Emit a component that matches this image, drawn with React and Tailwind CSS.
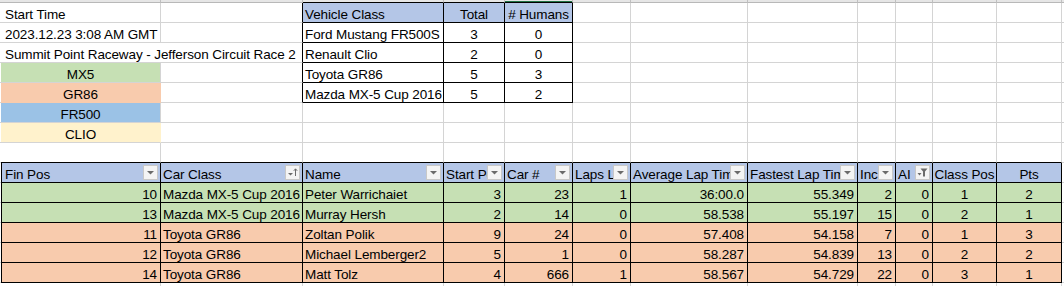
import React from 'react';
import clsx from 'clsx';

const W = [
  'w-[1px]',
  'w-[160px]',
  'w-[142px]',
  'w-[141px]',
  'w-[61px]',
  'w-[68px]',
  'w-[58px]',
  'w-[117px]',
  'w-[110px]',
  'w-[38px]',
  'w-[37px]',
  'w-[64px]',
  'w-[65px]',
  'flex-1',
];

const BG = {
  head: 'bg-[#b4c6e7]',
  green: 'bg-[#c6e0b4]',
  orange: 'bg-[#f8cbad]',
  blue: 'bg-[#9bc2e6]',
  cream: 'bg-[#fff2cc]',
};

function Cell({ w, b = 'g', r = 'g', l = false, bg = '', align = 'left', className = '', children }) {
  return (
    <div
      className={clsx(
        'shrink-0 h-full border-b border-r flex items-end overflow-hidden whitespace-nowrap leading-[15px]',
        w,
        b === 'k' ? 'border-b-black' : b === 'n' ? 'border-b-transparent' : 'border-b-[#d4d4d4]',
        r === 'k' ? 'border-r-black' : r === 'n' ? 'border-r-transparent' : 'border-r-[#d4d4d4]',
        l && 'border-l border-l-black',
        bg,
        align === 'right' && 'justify-end pr-[3px]',
        align === 'center' && 'justify-center',
        align === 'left' && (l ? 'pl-[3px]' : 'pl-[2px]'),
        className
      )}
    >
      {children}
    </div>
  );
}

function Spacer({ b = 'g' }) {
  return (
    <div
      className={clsx(
        'shrink-0 w-[1px] h-full border-b',
        b === 'k' ? 'border-b-black' : 'border-b-[#d4d4d4]'
      )}
    />
  );
}

function Row({ children, h = 'h-[20px]' }) {
  return <div className={clsx('flex w-full', h)}>{children}</div>;
}

function Tri() {
  return (
    <svg width="7" height="4" viewBox="0 0 7 4" className="block">
      <polygon points="0,0 7,0 3.5,3.5" fill="#6b6b6b" />
    </svg>
  );
}

function DropBtn({ kind = 'drop' }) {
  return (
    <div className="shrink-0 w-[15px] h-[15px] mr-[2px] mb-[2px] border border-[#c8c8c8] bg-[#f4f4f4] flex items-center justify-center">
      {kind === 'drop' && <Tri />}
      {kind === 'sort' && (
        <svg width="11" height="11" viewBox="0 0 11 11" className="block">
          <polygon points="1,6 6,6 3.5,8.5" fill="#6b6b6b" />
          <line x1="8.5" y1="2" x2="8.5" y2="9" stroke="#6b6b6b" strokeWidth="1" />
          <polyline points="6.8,3.8 8.5,1.8 10.2,3.8" fill="none" stroke="#6b6b6b" strokeWidth="1" />
        </svg>
      )}
      {kind === 'filter' && (
        <svg width="11" height="11" viewBox="0 0 11 11" className="block">
          <polygon points="0.5,6 4.5,6 2.5,8.5" fill="#6b6b6b" />
          <polygon points="3.5,1.5 10.5,1.5 8,4.5 8,9.5 6,9.5 6,4.5" fill="#6b6b6b" />
        </svg>
      )}
    </div>
  );
}

function HeadCell({ w, l = false, label, kind = 'drop', center = false }) {
  if (center) {
    return (
      <Cell w={w} b="k" r="k" bg={BG.head} align="center">
        {label}
      </Cell>
    );
  }
  return (
    <Cell w={w} b="k" r="k" l={l} bg={BG.head} align="none" className="justify-between">
      <span className={clsx('min-w-0 flex-1 overflow-hidden', l ? 'pl-[3px]' : 'pl-[2px]')}>{label}</span>
      <DropBtn kind={kind} />
    </Cell>
  );
}

const vehicles = [
  ['Ford Mustang FR500S', 3, 0],
  ['Renault Clio', 2, 0],
  ['Toyota GR86', 5, 3],
  ['Mazda MX-5 Cup 2016', 5, 2],
];

const legend = [
  ['MX5', BG.green, 'border-b-[#c6e0b4] border-r-[#c6e0b4]'],
  ['GR86', BG.orange, 'border-b-[#f8cbad] border-r-[#f8cbad]'],
  ['FR500', BG.blue, 'border-b-[#9bc2e6] border-r-[#9bc2e6]'],
  ['CLIO', BG.cream, 'border-b-[#d4d4d4] border-r-[#fff2cc]'],
];

const results = [
  [10, 'Mazda MX-5 Cup 2016', 'Peter Warrichaiet', 3, 23, 1, '36:00.0', '55.349', 2, 0, 1, 2, BG.green],
  [13, 'Mazda MX-5 Cup 2016', 'Murray Hersh', 2, 14, 0, '58.538', '55.197', 15, 0, 2, 1, BG.green],
  [11, 'Toyota GR86', 'Zoltan Polik', 9, 24, 0, '57.408', '54.158', 7, 0, 1, 3, BG.orange],
  [12, 'Toyota GR86', 'Michael Lemberger2', 5, 1, 0, '58.287', '54.839', 13, 0, 2, 2, BG.orange],
  [14, 'Toyota GR86', 'Matt Tolz', 4, 666, 1, '58.567', '54.729', 22, 0, 3, 1, BG.orange],
];

function EmptyCells({ from, to, b = 'g' }) {
  const out = [];
  for (let i = from; i <= to; i++) {
    out.push(<Cell key={i} w={W[i]} b={b} />);
  }
  return out;
}

export default function App() {
  return (
    <div className="w-[1064px] h-[286px] overflow-hidden bg-white text-black text-[13.5px] tracking-[-0.1px] font-['Liberation_Sans',Arial,sans-serif]">
      {/* top strip: bottom of column headers */}
      <div className="flex w-full h-[3px]">
        {W.map((w, i) => (
          <div
            key={i}
            className={clsx(
              'shrink-0 h-full border-b bg-[#e6e6e6]',
              w,
              i >= 3 && i <= 5 ? 'border-b-black' : 'border-b-[#b8b8b8]',
              i > 0 && i < 13 && 'border-r border-r-[#c0c0c0]'
            )}
          >
            {i === 5 && <div className="h-[1px] mt-[1px] bg-[#217346]" />}
          </div>
        ))}
      </div>

      {/* Row 1 */}
      <Row>
        <Spacer />
        <Cell w={W[1]} className="pl-[4px]">Start Time</Cell>
        <Cell w={W[2]} r="k" />
        <Cell w={W[3]} b="k" r="k" bg={BG.head}>Vehicle Class</Cell>
        <Cell w={W[4]} b="k" r="k" bg={BG.head} align="center">Total</Cell>
        <Cell w={W[5]} b="k" r="k" bg={BG.head} align="center"># Humans</Cell>
        <EmptyCells from={6} to={13} />
      </Row>

      {/* Rows 2-5 */}
      {vehicles.map((v, idx) => (
        <Row key={v[0]}>
          <Spacer />
          {idx === 0 && (
            <>
              <Cell w={W[1]} className="pl-[4px]">2023.12.23 3:08 AM GMT</Cell>
              <Cell w={W[2]} r="k" />
            </>
          )}
          {idx === 1 && (
            <Cell w="w-[302px]" r="k" className="pl-[4px]">
              Summit Point Raceway - Jefferson Circuit Race 2
            </Cell>
          )}
          {idx >= 2 && (
            <>
              <Cell w={W[1]} bg={legend[idx - 2][1]} align="center" className={legend[idx - 2][2]}>
                {legend[idx - 2][0]}
              </Cell>
              <Cell w={W[2]} r="k" />
            </>
          )}
          <Cell w={W[3]} b="k" r="k">{v[0]}</Cell>
          <Cell w={W[4]} b="k" r="k" align="center">{v[1]}</Cell>
          <Cell w={W[5]} b="k" r="k" align="center">{v[2]}</Cell>
          <EmptyCells from={6} to={13} />
        </Row>
      ))}

      {/* Rows 6-7 legend */}
      {[2, 3].map((k) => (
        <Row key={k}>
          <Spacer />
          <Cell w={W[1]} bg={legend[k][1]} align="center" className={legend[k][2]}>
            {legend[k][0]}
          </Cell>
          <EmptyCells from={2} to={13} />
        </Row>
      ))}

      {/* Row 8 empty, bottom black for table top */}
      <Row>
        <Spacer />
        <EmptyCells from={1} to={12} b="k" />
        <Cell w={W[13]} />
      </Row>

      {/* Row 9 header */}
      <Row>
        <Spacer />
        <HeadCell w={W[1]} l label="Fin Pos" />
        <HeadCell w={W[2]} label="Car Class" kind="sort" />
        <HeadCell w={W[3]} label="Name" />
        <HeadCell w={W[4]} label="Start Pos" />
        <HeadCell w={W[5]} label="Car #" />
        <HeadCell w={W[6]} label="Laps Led" />
        <HeadCell w={W[7]} label="Average Lap Time" />
        <HeadCell w={W[8]} label="Fastest Lap Time" />
        <HeadCell w={W[9]} label="Inc" />
        <HeadCell w={W[10]} label="AI" kind="filter" />
        <HeadCell w={W[11]} label="Class Pos" center />
        <HeadCell w={W[12]} label="Pts" center />
        <Cell w={W[13]} />
      </Row>

      {/* Data rows */}
      {results.map((r) => {
        const bg = r[12];
        return (
          <Row key={r[0]}>
            <Spacer />
            <Cell w={W[1]} l b="k" r="k" bg={bg} align="right">{r[0]}</Cell>
            <Cell w={W[2]} b="k" r="k" bg={bg}>{r[1]}</Cell>
            <Cell w={W[3]} b="k" r="k" bg={bg}>{r[2]}</Cell>
            <Cell w={W[4]} b="k" r="k" bg={bg} align="right">{r[3]}</Cell>
            <Cell w={W[5]} b="k" r="k" bg={bg} align="right">{r[4]}</Cell>
            <Cell w={W[6]} b="k" r="k" bg={bg} align="right">{r[5]}</Cell>
            <Cell w={W[7]} b="k" r="k" bg={bg} align="right">{r[6]}</Cell>
            <Cell w={W[8]} b="k" r="k" bg={bg} align="right">{r[7]}</Cell>
            <Cell w={W[9]} b="k" r="k" bg={bg} align="right">{r[8]}</Cell>
            <Cell w={W[10]} b="k" r="k" bg={bg} align="right">{r[9]}</Cell>
            <Cell w={W[11]} b="k" r="k" bg={bg} align="center">{r[10]}</Cell>
            <Cell w={W[12]} b="k" r="k" bg={bg} align="center">{r[11]}</Cell>
            <Cell w={W[13]} />
          </Row>
        );
      })}

      {/* partial row */}
      <Row>
        <Spacer />
        <EmptyCells from={1} to={13} />
      </Row>
    </div>
  );
}
